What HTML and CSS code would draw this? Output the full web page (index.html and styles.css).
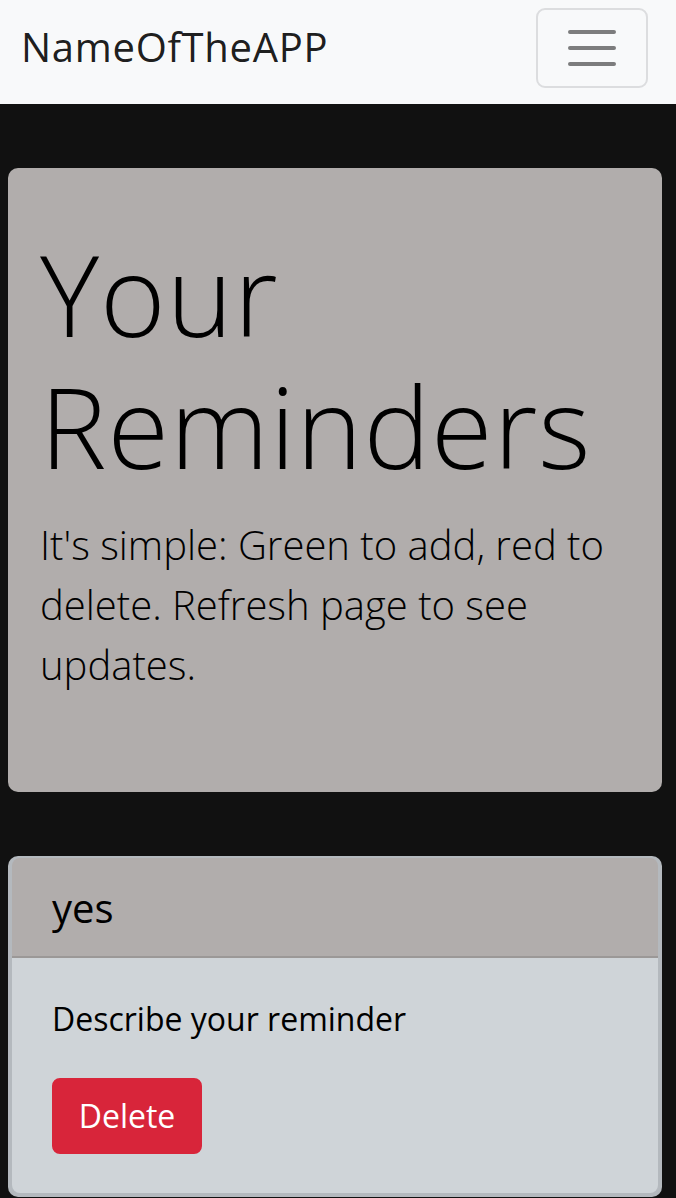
FILE: index.html
```html
<!DOCTYPE html>
<html lang="en">
<head>
<meta charset="utf-8">
<title>NameOfTheAPP</title>
<link rel="stylesheet" href="styles.css">
</head>
<body>
<nav class="navbar">
  <a class="brand" href="#">NameOfTheAPP</a>
  <button class="toggler" type="button" aria-label="Toggle navigation">
    <svg class="toggler-icon" viewBox="0 0 30 30" width="60" height="60" aria-hidden="true">
      <path d="M4 7h22M4 15h22M4 23h22" fill="none" stroke="rgba(0,0,0,0.5)" stroke-width="2" stroke-linecap="round" stroke-miterlimit="10"/>
    </svg>
  </button>
</nav>
<main>
  <section class="jumbotron">
    <h1 class="display">Your Reminders</h1>
    <p class="lead">It's simple: Green to add, red to delete. Refresh page to see updates.</p>
  </section>
  <article class="card">
    <header class="card-header">yes</header>
    <div class="card-body">
      <p class="card-text">Describe your reminder</p>
      <button class="btn-danger" type="button">Delete</button>
    </div>
  </article>
</main>
</body>
</html>
```
FILE: styles.css
```css
html, body {
  margin: 0;
  padding: 0;
}
body {
  background: #111111;
  font-family: "Open Sans", "Noto Sans", sans-serif;
  color: #000;
  overflow: hidden;
  height: 1198px;
}
.navbar {
  background: #f8f9fa;
  height: 104px;
  box-sizing: border-box;
  padding: 8px 28px 0 21px;
  display: flex;
  justify-content: space-between;
  align-items: flex-start;
}
.brand {
  font-size: 40px;
  line-height: 77px;
  font-weight: 400;
  letter-spacing: 0.7px;
  color: rgba(0, 0, 0, 0.9);
  text-decoration: none;
}
.toggler {
  width: 112px;
  height: 80px;
  box-sizing: border-box;
  padding: 8px 24px;
  border: 2px solid #dcdddf;
  border-radius: 9px;
  background: transparent;
  display: flex;
  align-items: center;
  justify-content: center;
}
.toggler-icon {
  display: block;
  width: 60px;
  height: 60px;
}
.jumbotron {
  background: #b1adac;
  border-radius: 10px;
  margin: 64px 14px 64px 8px;
  padding: 60px 32px 97px 32px;
}
.display {
  margin: 0 0 23px 0;
  font-size: 112px;
  line-height: 132px;
  font-weight: 300;
  letter-spacing: 1px;
}
.lead {
  margin: 0;
  font-size: 40px;
  line-height: 60px;
  font-weight: 300;
}
.card {
  margin: 0 14px 0 8px;
  background: #b4b9be;
  border-radius: 10px;
  padding: 2px 4px 4px 4px;
}
.card-header {
  background: #b1adac;
  border-radius: 8px 8px 0 0;
  border-bottom: 2px solid #9b9897;
  padding: 26px 40px 24px 40px;
  font-size: 40px;
  line-height: 48px;
  font-weight: 500;
}
.card-body {
  background: #cfd4d8;
  border-radius: 0 0 8px 8px;
  padding: 37px 40px 39px 40px;
}
.card-text {
  margin: 0 0 35px 0;
  font-size: 32px;
  line-height: 48px;
  font-weight: 400;
}
.btn-danger {
  display: inline-block;
  width: 150px;
  height: 76px;
  box-sizing: border-box;
  border: 2px solid #d8253a;
  border-radius: 8px;
  background: #d8253a;
  color: #fff;
  font-family: inherit;
  font-size: 32px;
  line-height: 48px;
  font-weight: 400;
  padding: 12px 24px;
}
```
